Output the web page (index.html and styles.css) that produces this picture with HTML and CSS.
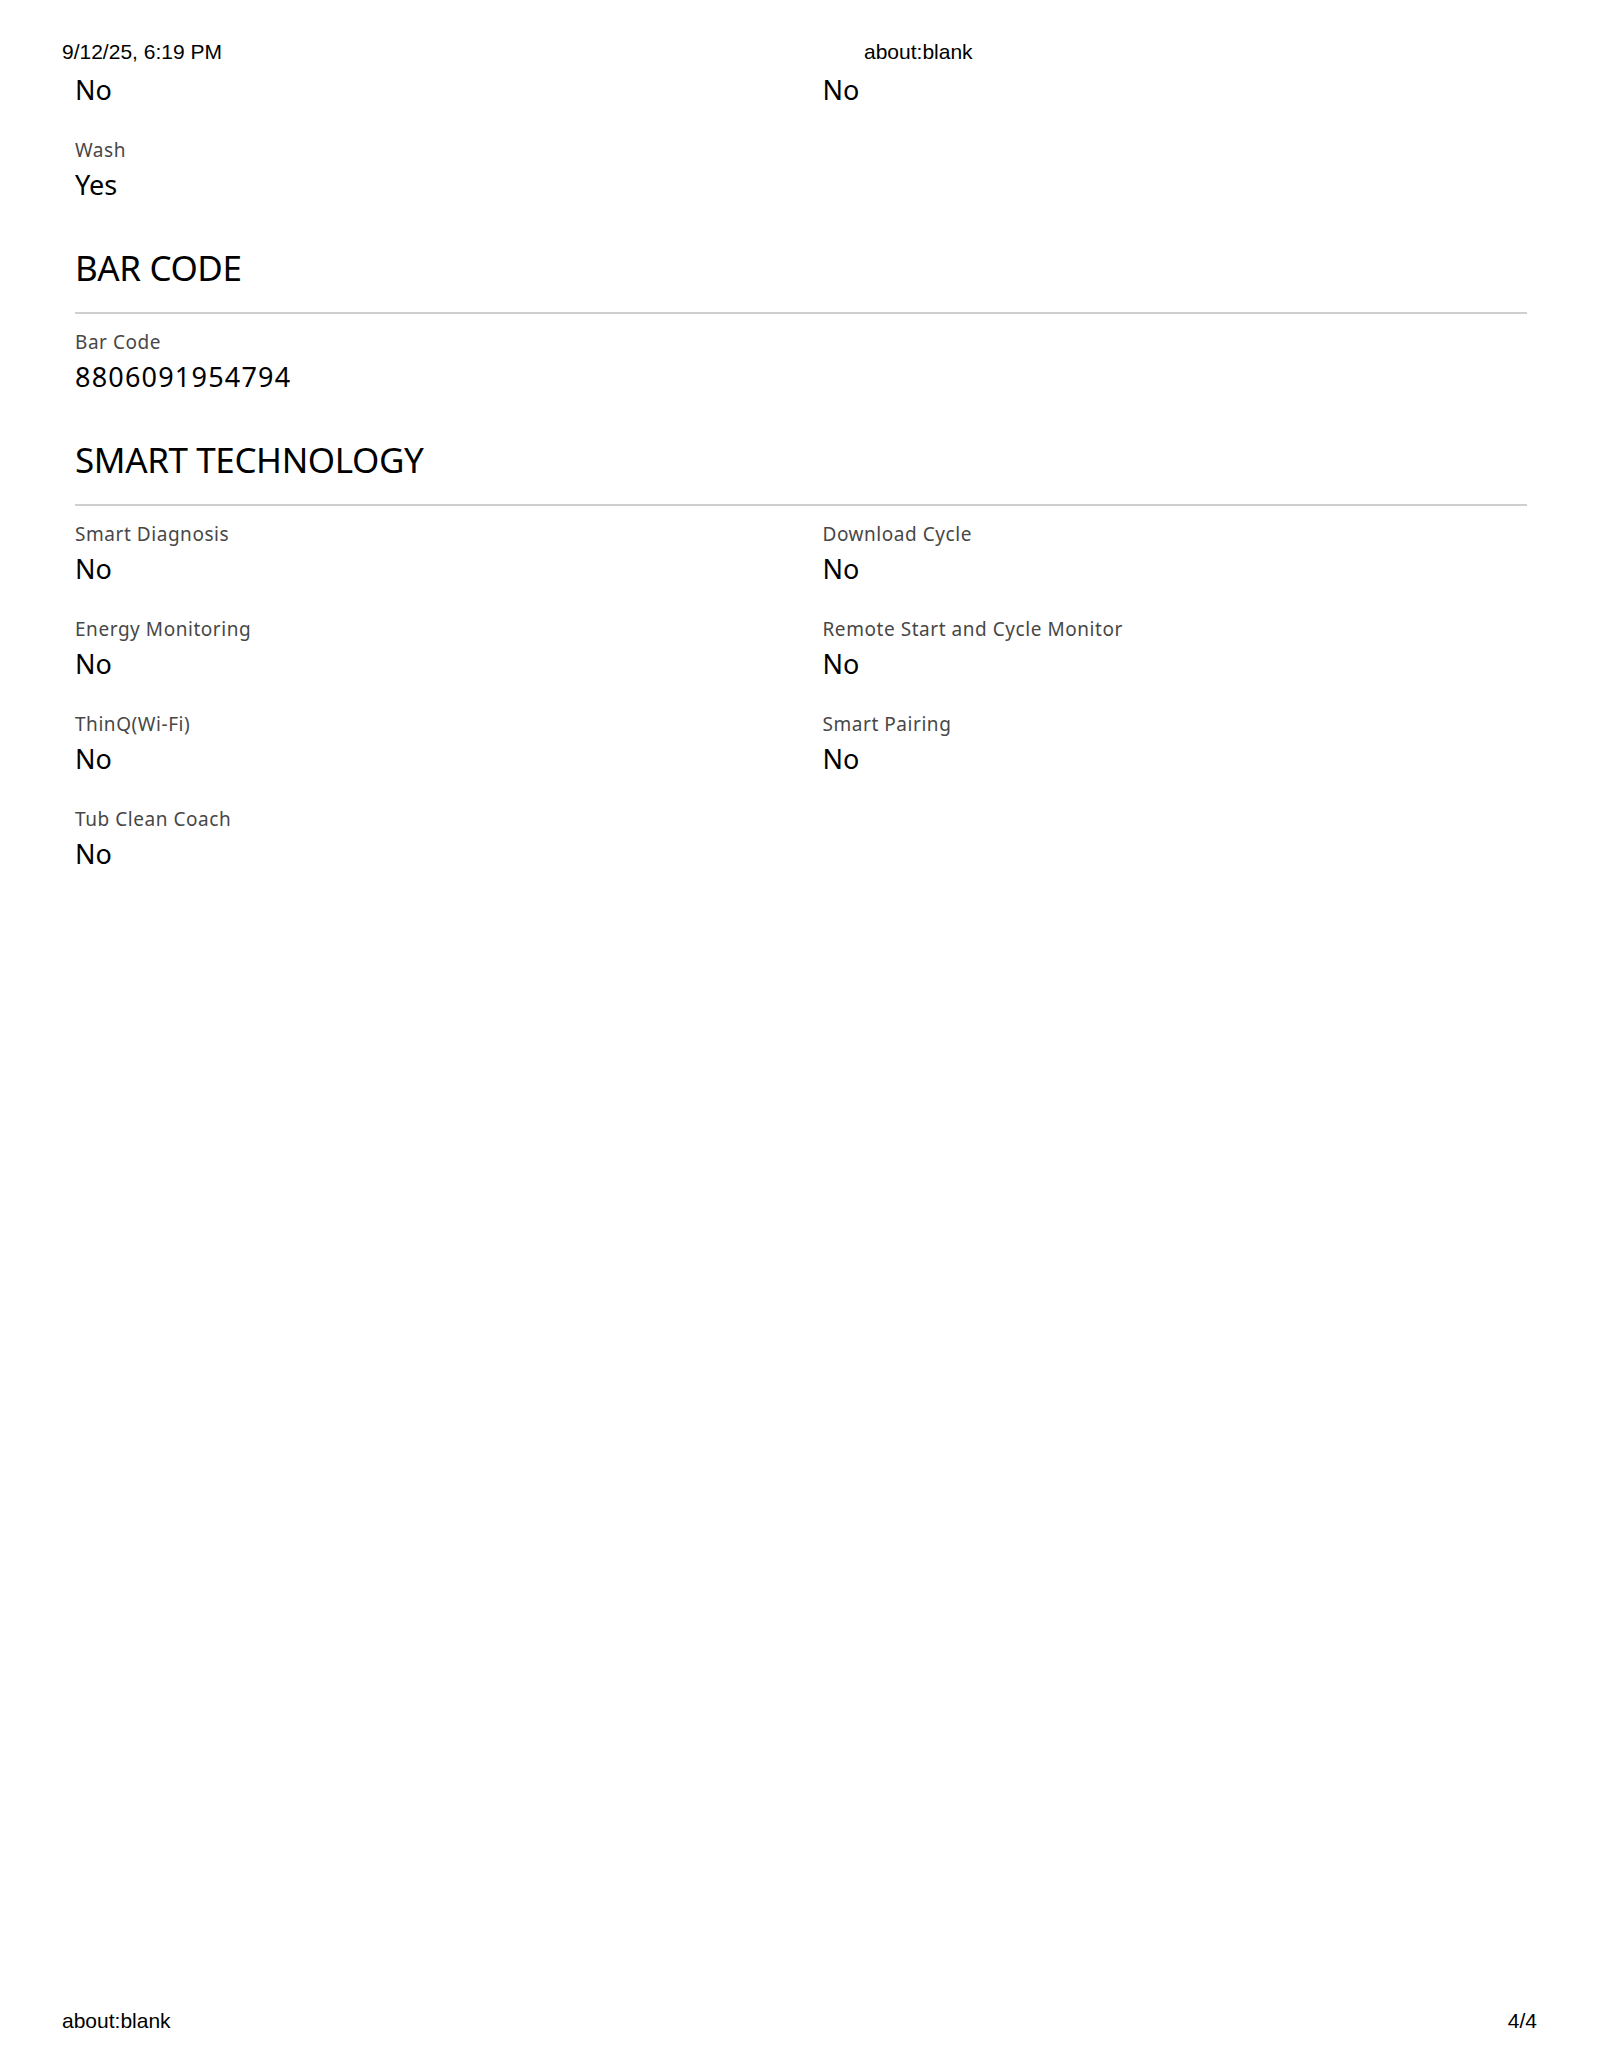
FILE: index.html
```html
<!DOCTYPE html>
<html lang="en">
<head>
<meta charset="utf-8">
<title>about:blank</title>
<link rel="stylesheet" href="styles.css">
</head>
<body>
<div class="page">
  <header class="print-head">
    <span class="print-date">9/12/25, 6:19 PM</span>
    <span class="print-title">about:blank</span>
  </header>

  <main class="content">
    <div class="spec-grid">
      <div class="spec"><div class="spec-value">No</div></div>
      <div class="spec"><div class="spec-value">No</div></div>
      <div class="spec">
        <div class="spec-label">Wash</div>
        <div class="spec-value">Yes</div>
      </div>
    </div>

    <section class="spec-section">
      <h2 class="section-title">BAR CODE</h2>
      <div class="spec-grid">
        <div class="spec">
          <div class="spec-label">Bar Code</div>
          <div class="spec-value spec-value--numeric">8806091954794</div>
        </div>
      </div>
    </section>

    <section class="spec-section">
      <h2 class="section-title">SMART TECHNOLOGY</h2>
      <div class="spec-grid">
        <div class="spec">
          <div class="spec-label">Smart Diagnosis</div>
          <div class="spec-value">No</div>
        </div>
        <div class="spec">
          <div class="spec-label">Download Cycle</div>
          <div class="spec-value">No</div>
        </div>
        <div class="spec">
          <div class="spec-label">Energy Monitoring</div>
          <div class="spec-value">No</div>
        </div>
        <div class="spec">
          <div class="spec-label">Remote Start and Cycle Monitor</div>
          <div class="spec-value">No</div>
        </div>
        <div class="spec">
          <div class="spec-label">ThinQ(Wi-Fi)</div>
          <div class="spec-value">No</div>
        </div>
        <div class="spec">
          <div class="spec-label">Smart Pairing</div>
          <div class="spec-value">No</div>
        </div>
        <div class="spec">
          <div class="spec-label">Tub Clean Coach</div>
          <div class="spec-value">No</div>
        </div>
      </div>
    </section>
  </main>

  <footer class="print-foot">
    <span>about:blank</span>
    <span>4/4</span>
  </footer>
</div>
</body>
</html>
```

FILE: styles.css
```css
* {
  box-sizing: border-box;
}

html, body {
  margin: 0;
  padding: 0;
  background: #ffffff;
}

.page {
  width: 1600px;
  min-height: 2071px;
  display: flex;
  flex-direction: column;
}

.print-head {
  display: grid;
  grid-template-columns: 802px 1fr;
  padding: 40px 0 0 62px;
  font-family: "Liberation Sans", Arial, sans-serif;
  font-size: 21px;
  line-height: 24px;
  color: #000;
}

.content {
  padding: 8px 73px 0 75px;
  font-family: "Noto Sans", "Open Sans", sans-serif;
  color: #000;
}

.spec-grid {
  display: grid;
  grid-template-columns: 1fr 1fr;
  column-gap: 43px;
  row-gap: 28px;
}

.spec-label {
  font-size: 19px;
  line-height: 28px;
  letter-spacing: 0.55px;
  color: #474747;
  margin-bottom: 3px;
}

.spec-value {
  font-size: 27px;
  line-height: 36px;
  color: #000;
}

.spec-value--numeric {
  letter-spacing: 1.2px;
}

.spec-section {
  margin-top: 43px;
}

.section-title {
  margin: 0 0 14px;
  font-weight: 400;
  font-size: 35px;
  line-height: 44px;
  letter-spacing: -0.4px;
  padding-bottom: 22px;
  border-bottom: 2px solid #cfcfcf;
}

.print-foot {
  margin-top: auto;
  display: flex;
  justify-content: space-between;
  padding: 0 63px 38px 62px;
  font-family: "Liberation Sans", Arial, sans-serif;
  font-size: 21px;
  line-height: 24px;
  color: #000;
}
```
